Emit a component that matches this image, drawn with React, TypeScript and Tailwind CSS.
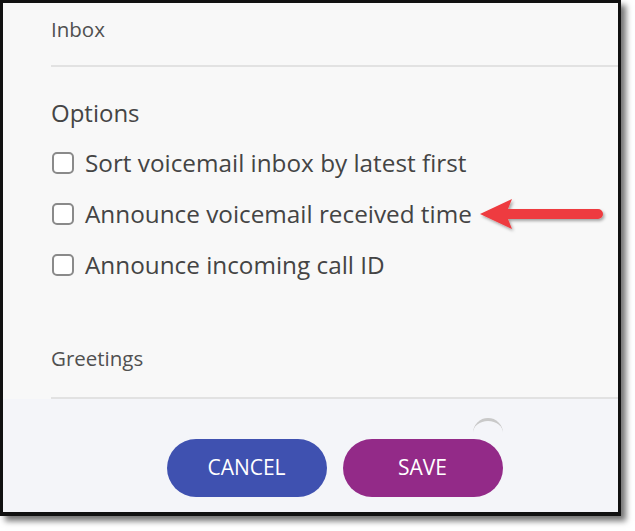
import React from 'react'

const options = [
  'Sort voicemail inbox by latest first',
  'Announce voicemail received time',
  'Announce incoming call ID',
]

const RedArrow = () => (
  <svg width="134" height="46" viewBox="0 0 134 46" className="absolute left-[475px] top-[191px]">
    <defs>
      <filter id="sh" x="-10%" y="-30%" width="130%" height="170%">
        <feDropShadow dx="1.5" dy="2" stdDeviation="1.5" floodColor="#000" floodOpacity="0.35" />
      </filter>
    </defs>
    <g filter="url(#sh)">
      <path d="M5 23 L37 8 L33 18 L123 18 a5 5 0 0 1 0 10 L33 28 L37 38 Z" fill="#ee3b3f" />
    </g>
  </svg>
)

const Checkbox = () => (
  <span className="w-[22px] h-[22px] rounded-[5px] border-2 border-[#8a8a8a] bg-white shrink-0" />
)

const App = () => {
  return (
    <div className="relative w-[635px] h-[531px] bg-white overflow-hidden" style={{ fontFamily: '"Open Sans", Lato, sans-serif' }}>
      <div className="w-[621px] h-[516px] border-t-[3px] border-l-[3px] border-r-[3px] border-b-[4px] border-[#111] shadow-[5px_5px_6px_rgba(0,0,0,0.55)] bg-[#f8f8f8] flex flex-col">
        <div className="pl-[48px] h-[64px] flex flex-col justify-between">
          <div className="pt-[14px] text-[20.5px] text-[#505050] leading-6">Inbox</div>
          <div className="h-[2px] bg-[#e2e2e2]" />
        </div>

        <div className="pl-[48px] pt-[32px] text-[24px] text-[#454545] leading-7">Options</div>
        <div className="pl-[49px] pt-[22px] flex flex-col gap-[23px]">
          {options.map((label) => (
            <label key={label} className="flex items-center gap-[11px] text-[24.3px] text-[#444] leading-7">
              <Checkbox />
              <span>{label}</span>
            </label>
          ))}
        </div>

        <div className="pl-[48px] mt-[67px] h-[53px] flex flex-col justify-between">
          <div className="text-[20.5px] text-[#505050] leading-6">Greetings</div>
          <div className="h-[2px] bg-[#e2e2e2]" />
        </div>

        <div className="relative flex-1 bg-[#f4f5f9] flex justify-center gap-[16px] pt-[40px] pl-[48px]">
          <span className="absolute left-[470px] top-[19px] w-[30px] h-[30px] rounded-full border-t-[3px] border-[#c9c9c9]" />
          <button className="w-[160px] h-[58px] rounded-full bg-[#3f51b0] text-white text-[21px]">CANCEL</button>
          <button className="w-[160px] h-[58px] rounded-full bg-[#932a88] text-white text-[21px]">SAVE</button>
        </div>
      </div>
      <RedArrow />
    </div>
  )
}

export default App
